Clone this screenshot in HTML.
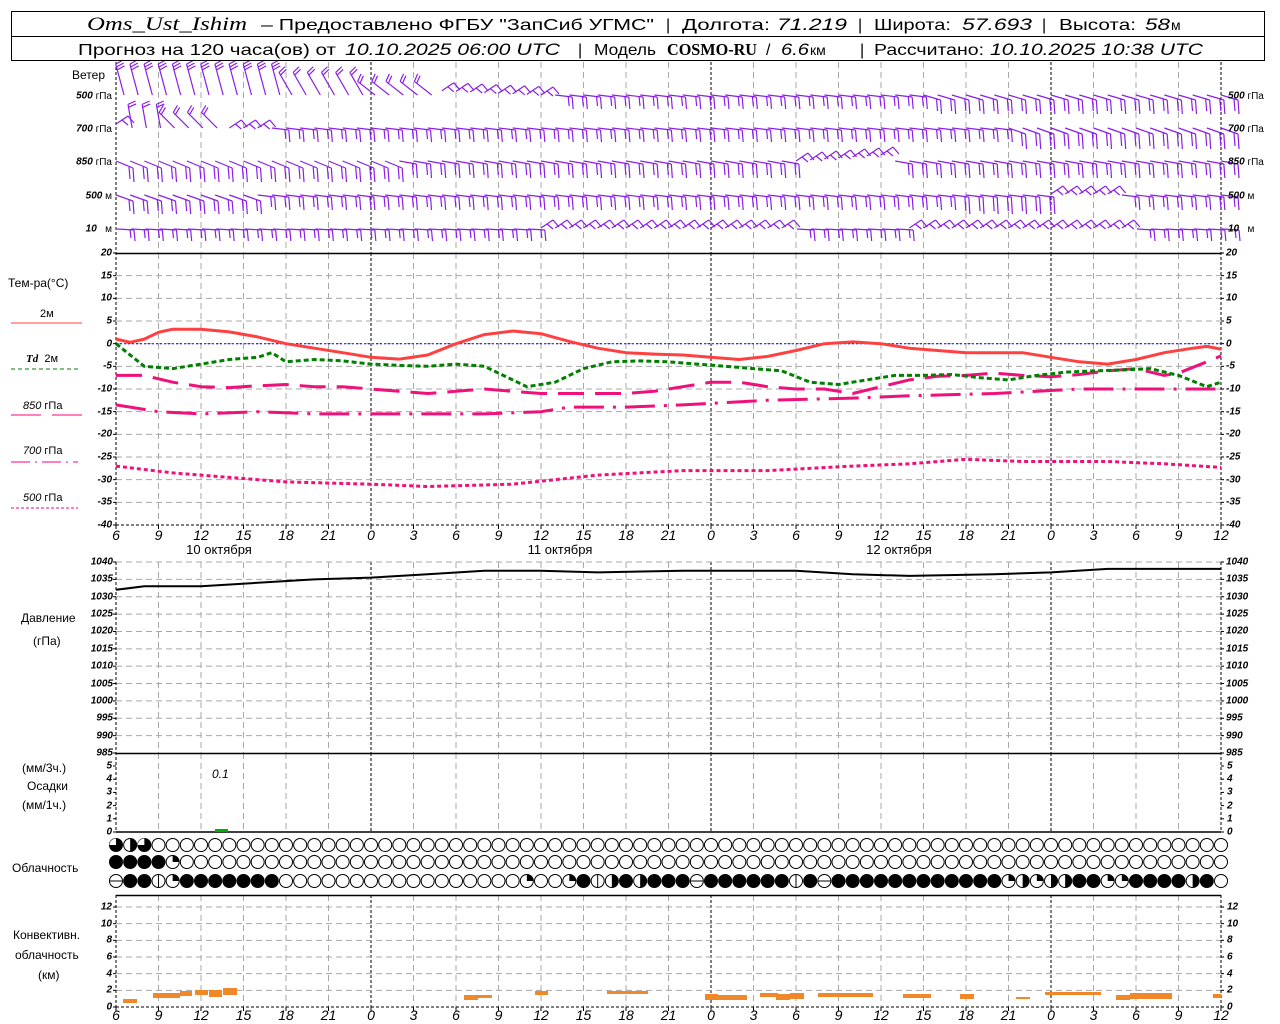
<!DOCTYPE html>
<html><head><meta charset="utf-8"><style>
body{margin:0;background:#fff}
svg{display:block}
text{font-family:"Liberation Sans",sans-serif;fill:#000}
.tl{font-size:10px;font-style:italic;font-weight:bold;text-anchor:end;dominant-baseline:central}
.tr{font-size:10px;font-style:italic;font-weight:bold;text-anchor:start;dominant-baseline:central}
.xl{font-size:14px;font-style:italic;text-anchor:middle}
.lb{font-size:12px}
.h{font-size:16px}
.hi{font-size:17px;font-style:italic}
</style></head><body>
<svg id="s" width="1280" height="1024" viewBox="0 0 1280 1024" xmlns="http://www.w3.org/2000/svg">
<rect x="0" y="0" width="1280" height="1024" fill="#fff"/>
<g id="g"></g>
<!-- header -->
<rect x="11.5" y="11.5" width="1253" height="49" fill="none" stroke="#000" stroke-width="1"/>
<line x1="11" y1="36.5" x2="1265" y2="36.5" stroke="#000"/>
<text x="87" y="30" textLength="160" lengthAdjust="spacingAndGlyphs" style="font-family:'Liberation Serif',serif;font-size:19px;font-style:italic">Oms_Ust_Ishim</text>
<text class="h" x="261" y="30" textLength="393" lengthAdjust="spacingAndGlyphs">– Предоставлено ФГБУ "ЗапСиб УГМС"</text>
<text class="h" x="666" y="30">|</text>
<text class="h" x="682" y="30" textLength="88" lengthAdjust="spacingAndGlyphs">Долгота:</text>
<text class="hi" x="777" y="30" textLength="70" lengthAdjust="spacingAndGlyphs">71.219</text>
<text class="h" x="858" y="30">|</text>
<text class="h" x="874" y="30" textLength="77" lengthAdjust="spacingAndGlyphs">Широта:</text>
<text class="hi" x="962" y="30" textLength="70" lengthAdjust="spacingAndGlyphs">57.693</text>
<text class="h" x="1042" y="30">|</text>
<text class="h" x="1059" y="30" textLength="77" lengthAdjust="spacingAndGlyphs">Высота:</text>
<text class="hi" x="1145" y="30" textLength="25" lengthAdjust="spacingAndGlyphs">58</text>
<text class="h" x="1171" y="30" style="font-size:14px">м</text>
<text class="h" x="78" y="55" textLength="258" lengthAdjust="spacingAndGlyphs">Прогноз на 120 часа(ов) от</text>
<text class="hi" x="345" y="55" textLength="215" lengthAdjust="spacingAndGlyphs">10.10.2025 06:00 UTC</text>
<text class="h" x="578" y="55">|</text>
<text class="h" x="594" y="55" textLength="62" lengthAdjust="spacingAndGlyphs">Модель</text>
<text x="667" y="55" textLength="90" lengthAdjust="spacingAndGlyphs" style="font-family:'Liberation Serif',serif;font-size:17px;font-weight:bold">COSMO-RU</text>
<text class="h" x="766" y="55">/</text>
<text class="hi" x="781" y="55" textLength="28" lengthAdjust="spacingAndGlyphs">6.6</text>
<text class="h" x="810" y="55" style="font-size:14px">км</text>
<text class="h" x="860" y="55">|</text>
<text class="h" x="874" y="55" textLength="110" lengthAdjust="spacingAndGlyphs">Рассчитано:</text>
<text class="hi" x="990" y="55" textLength="213" lengthAdjust="spacingAndGlyphs">10.10.2025 10:38 UTC</text>

<!-- wind labels -->
<text class="lb" x="72" y="79">Ветер</text>
<text class="tl" x="112" y="96">500 <tspan style="font-style:normal;font-weight:normal">гПа</tspan></text>
<text class="tl" x="112" y="129">700 <tspan style="font-style:normal;font-weight:normal">гПа</tspan></text>
<text class="tl" x="112" y="162">850 <tspan style="font-style:normal;font-weight:normal">гПа</tspan></text>
<text class="tl" x="112" y="196">500 <tspan style="font-style:normal;font-weight:normal">м</tspan></text>
<text class="tl" x="112" y="229">10 &#160;&#160;<tspan style="font-style:normal;font-weight:normal">м</tspan></text>
<text class="tr" x="1228" y="96">500 <tspan style="font-style:normal;font-weight:normal">гПа</tspan></text>
<text class="tr" x="1228" y="129">700 <tspan style="font-style:normal;font-weight:normal">гПа</tspan></text>
<text class="tr" x="1228" y="162">850 <tspan style="font-style:normal;font-weight:normal">гПа</tspan></text>
<text class="tr" x="1228" y="196">500 <tspan style="font-style:normal;font-weight:normal">м</tspan></text>
<text class="tr" x="1228" y="229">10 &#160;&#160;<tspan style="font-style:normal;font-weight:normal">м</tspan></text>

<!-- temp legend -->
<text class="lb" x="8" y="287">Тем-ра(°C)</text>
<text class="lb" x="40" y="317" style="font-size:11px">2м</text>
<line x1="11" y1="323" x2="82" y2="323" stroke="#ff4040" stroke-width="1"/>
<text class="lb" x="26" y="362" style="font-size:11px"><tspan style="font-style:italic;font-weight:bold;font-family:'Liberation Serif',serif">Td</tspan>&#160;&#160;2м</text>
<line x1="11" y1="369" x2="78" y2="369" stroke="#008000" stroke-dasharray="4,3"/>
<text class="lb" x="23" y="409" style="font-size:11px"><tspan style="font-style:italic">850</tspan> гПа</text>
<line x1="11" y1="415" x2="41" y2="415" stroke="#ff0080"/><line x1="52" y1="415" x2="82" y2="415" stroke="#ff0080"/>
<text class="lb" x="23" y="454" style="font-size:11px"><tspan style="font-style:italic">700</tspan> гПа</text>
<line x1="11" y1="462" x2="78" y2="462" stroke="#ff0080" stroke-dasharray="19,5,2,5"/>
<text class="lb" x="23" y="501" style="font-size:11px"><tspan style="font-style:italic">500</tspan> гПа</text>
<line x1="11" y1="508" x2="78" y2="508" stroke="#ff0080" stroke-dasharray="3,2"/>

<!-- temp ticks -->
<text class="tl" x="112" y="253">20</text><text class="tl" x="112" y="276">15</text><text class="tl" x="112" y="298">10</text><text class="tl" x="112" y="321">5</text><text class="tl" x="112" y="344">0</text><text class="tl" x="112" y="366">-5</text><text class="tl" x="112" y="389">-10</text><text class="tl" x="112" y="412">-15</text><text class="tl" x="112" y="434">-20</text><text class="tl" x="112" y="457">-25</text><text class="tl" x="112" y="480">-30</text><text class="tl" x="112" y="502">-35</text><text class="tl" x="112" y="525">-40</text>
<text class="tr" x="1226" y="253">20</text><text class="tr" x="1226" y="276">15</text><text class="tr" x="1226" y="298">10</text><text class="tr" x="1226" y="321">5</text><text class="tr" x="1226" y="344">0</text><text class="tr" x="1226" y="366">-5</text><text class="tr" x="1226" y="389">-10</text><text class="tr" x="1226" y="412">-15</text><text class="tr" x="1226" y="434">-20</text><text class="tr" x="1226" y="457">-25</text><text class="tr" x="1226" y="480">-30</text><text class="tr" x="1226" y="502">-35</text><text class="tr" x="1226" y="525">-40</text>

<!-- x labels temp -->
<g>
<text class="xl" x="116" y="540">6</text><text class="xl" x="158.5" y="540">9</text><text class="xl" x="201" y="540">12</text><text class="xl" x="243.5" y="540">15</text><text class="xl" x="286" y="540">18</text><text class="xl" x="328.5" y="540">21</text><text class="xl" x="371" y="540">0</text><text class="xl" x="413.5" y="540">3</text><text class="xl" x="456" y="540">6</text><text class="xl" x="498.5" y="540">9</text><text class="xl" x="541" y="540">12</text><text class="xl" x="583.5" y="540">15</text><text class="xl" x="626" y="540">18</text><text class="xl" x="668.5" y="540">21</text><text class="xl" x="711" y="540">0</text><text class="xl" x="753.5" y="540">3</text><text class="xl" x="796" y="540">6</text><text class="xl" x="838.5" y="540">9</text><text class="xl" x="881" y="540">12</text><text class="xl" x="923.5" y="540">15</text><text class="xl" x="966" y="540">18</text><text class="xl" x="1008.5" y="540">21</text><text class="xl" x="1051" y="540">0</text><text class="xl" x="1093.5" y="540">3</text><text class="xl" x="1136" y="540">6</text><text class="xl" x="1178.5" y="540">9</text><text class="xl" x="1221" y="540">12</text>
</g>
<text class="lb" x="219" y="554" text-anchor="middle" style="font-size:13px">10 октября</text>
<text class="lb" x="560" y="554" text-anchor="middle" style="font-size:13px">11 октября</text>
<text class="lb" x="899" y="554" text-anchor="middle" style="font-size:13px">12 октября</text>

<!-- pressure -->
<text class="lb" x="21" y="622">Давление</text>
<text class="lb" x="33" y="645">(гПа)</text>
<text class="tl" x="113" y="562">1040</text><text class="tl" x="113" y="579">1035</text><text class="tl" x="113" y="597">1030</text><text class="tl" x="113" y="614">1025</text><text class="tl" x="113" y="631">1020</text><text class="tl" x="113" y="649">1015</text><text class="tl" x="113" y="666">1010</text><text class="tl" x="113" y="684">1005</text><text class="tl" x="113" y="701">1000</text><text class="tl" x="113" y="718">995</text><text class="tl" x="113" y="736">990</text><text class="tl" x="113" y="753">985</text>
<text class="tr" x="1226" y="562">1040</text><text class="tr" x="1226" y="579">1035</text><text class="tr" x="1226" y="597">1030</text><text class="tr" x="1226" y="614">1025</text><text class="tr" x="1226" y="631">1020</text><text class="tr" x="1226" y="649">1015</text><text class="tr" x="1226" y="666">1010</text><text class="tr" x="1226" y="684">1005</text><text class="tr" x="1226" y="701">1000</text><text class="tr" x="1226" y="718">995</text><text class="tr" x="1226" y="736">990</text><text class="tr" x="1226" y="753">985</text>

<!-- precip -->
<text class="lb" x="22" y="772">(мм/3ч.)</text>
<text class="lb" x="27" y="790">Осадки</text>
<text class="lb" x="22" y="809">(мм/1ч.)</text>
<text class="tl" x="112" y="766">5</text><text class="tl" x="112" y="779">4</text><text class="tl" x="112" y="792">3</text><text class="tl" x="112" y="806">2</text><text class="tl" x="112" y="819">1</text><text class="tl" x="112" y="832">0</text>
<text class="tr" x="1227" y="766">5</text><text class="tr" x="1227" y="779">4</text><text class="tr" x="1227" y="792">3</text><text class="tr" x="1227" y="806">2</text><text class="tr" x="1227" y="819">1</text><text class="tr" x="1227" y="832">0</text>
<text x="212" y="778" style="font-size:12px;font-style:italic">0.1</text>

<text class="lb" x="12" y="872">Облачность</text>

<!-- convective -->
<text class="lb" x="13" y="939">Конвективн.</text>
<text class="lb" x="15" y="959">облачность</text>
<text class="lb" x="38" y="979">(км)</text>
<text class="tl" x="112" y="907">12</text><text class="tl" x="112" y="924">10</text><text class="tl" x="112" y="940">8</text><text class="tl" x="112" y="957">6</text><text class="tl" x="112" y="974">4</text><text class="tl" x="112" y="990">2</text><text class="tl" x="112" y="1007">0</text>
<text class="tr" x="1227" y="907">12</text><text class="tr" x="1227" y="924">10</text><text class="tr" x="1227" y="940">8</text><text class="tr" x="1227" y="957">6</text><text class="tr" x="1227" y="974">4</text><text class="tr" x="1227" y="990">2</text><text class="tr" x="1227" y="1007">0</text>
<g>
<text class="xl" x="116" y="1020">6</text><text class="xl" x="158.5" y="1020">9</text><text class="xl" x="201" y="1020">12</text><text class="xl" x="243.5" y="1020">15</text><text class="xl" x="286" y="1020">18</text><text class="xl" x="328.5" y="1020">21</text><text class="xl" x="371" y="1020">0</text><text class="xl" x="413.5" y="1020">3</text><text class="xl" x="456" y="1020">6</text><text class="xl" x="498.5" y="1020">9</text><text class="xl" x="541" y="1020">12</text><text class="xl" x="583.5" y="1020">15</text><text class="xl" x="626" y="1020">18</text><text class="xl" x="668.5" y="1020">21</text><text class="xl" x="711" y="1020">0</text><text class="xl" x="753.5" y="1020">3</text><text class="xl" x="796" y="1020">6</text><text class="xl" x="838.5" y="1020">9</text><text class="xl" x="881" y="1020">12</text><text class="xl" x="923.5" y="1020">15</text><text class="xl" x="966" y="1020">18</text><text class="xl" x="1008.5" y="1020">21</text><text class="xl" x="1051" y="1020">0</text><text class="xl" x="1093.5" y="1020">3</text><text class="xl" x="1136" y="1020">6</text><text class="xl" x="1178.5" y="1020">9</text><text class="xl" x="1221" y="1020">12</text>
</g>
</svg>
<script>
(function(){
var ns='http://www.w3.org/2000/svg',G=document.getElementById('g');
function el(t,a){var e=document.createElementNS(ns,t);for(var k in a)e.setAttribute(k,a[k]);G.appendChild(e);return e;}
function L(x1,y1,x2,y2,c,w,d){var a={x1:x1,y1:y1,x2:x2,y2:y2,stroke:c,'stroke-width':w||1};if(d)a['stroke-dasharray']=d;return el('line',a);}
var X=function(h){return 116+14.1667*h;};
var GR='#a8a8a8';
var panels=[[62,253],[253,525],[562,753],[753,832],[895,1007]];
for(var i=1;i<26;i++){var x=116+42.5*i,day=(i==6||i==14||i==22);
 panels.forEach(function(p){L(x,p[0],x,p[1],day?'#000':GR,1,day?'3,2':'6,4');});}
for(var k=1;k<12;k++){var y=253+22.667*k;L(116,y,1221,y,GR,1,'6,4');}
for(var k=0;k<11;k++){var y=562+17.364*k;L(116,y,1221,y,GR,1,'6,4');}
for(var k=1;k<=6;k++){var y=1007-16.667*k;L(116,y,1221,y,GR,1,'6,4');}
[[62,525],[562,832],[895,1007]].forEach(function(p){L(116,p[0],116,p[1],'#000',1,'3,2');L(1221,p[0],1221,p[1],'#000',1,'3,2');});
L(116,253.5,1221,253.5,'#000',1.5);L(116,525,1221,525,'#000',1,'3,2');
L(116,753.5,1221,753.5,'#000',1.5);L(116,832,1221,832,'#000',1.5);
L(116,895.5,1221,895.5,'#000',1.5);L(116,1007,1221,1007,'#000',1,'3,2');
function ticks(y0,y1,n){for(var k=0;k<=n;k++){var y=y0+(y1-y0)*k/n;L(113,y,116,y,'#000');L(1221,y,1224,y,'#000');}}
ticks(253,525,12);ticks(562,753,11);ticks(766,832,5);ticks(907,1007,6);
for(var i=0;i<=26;i++){var x=116+42.5*i;L(x,525,x,529,'#000');L(x,1007,x,1011,'#000');}
L(116,343.7,1221,343.7,'#0000ff',1,'2,2');
var TY=function(t){return 343.67-4.5333*t;};
function curve(pts,fy,c,w,d){var s='';pts.forEach(function(p){s+=X(p[0]).toFixed(1)+','+fy(p[1]).toFixed(1)+' ';});var a={points:s,fill:'none',stroke:c,'stroke-width':w,'stroke-linejoin':'round'};if(d)a['stroke-dasharray']=d;el('polyline',a);}
curve([[0,-27],[4,-28.5],[8,-29.5],[12,-30.5],[18,-31],[22,-31.5],[28,-31],[34,-29],[40,-28],[46,-28],[52,-27],[56,-26.5],[60,-25.5],[64,-26],[70,-26],[74,-26.5],[78,-27.3]],TY,'#f0107a',3,'4,3');
curve([[0,-13.5],[3,-15],[6,-15.5],[10,-15],[14,-15.5],[20,-15.5],[26,-15.5],[30,-15],[32,-14],[36,-14],[40,-13.5],[46,-12.5],[52,-12],[56,-11.5],[62,-11],[68,-10],[72,-10],[78,-10]],TY,'#f0107a',3,'30,9,3,9');
curve([[0,-7],[2,-7],[4,-8.5],[6,-9.5],[8,-9.7],[10,-9.3],[12,-9],[14,-9.5],[16,-9.5],[18,-10],[20,-10.5],[22,-11],[24,-10.5],[26,-10],[28,-10.5],[30,-11],[34,-11],[36,-11],[38,-10.5],[40,-9.5],[42,-8.5],[44,-8.5],[46,-9.5],[48,-10],[50,-10],[52,-11],[54,-9.5],[56,-8],[58,-7.2],[60,-7],[62,-6.5],[64,-7],[66,-7.3],[68,-6.8],[70,-6],[72,-5.5],[74,-7],[75,-6.5],[77,-4],[78,-2.7]],TY,'#f0107a',3,'26,11');
curve([[0,0],[2,-5],[4,-5.5],[6,-4.5],[8,-3.5],[10,-3],[11,-2],[12,-4],[14,-3.5],[16,-3.8],[18,-4.5],[20,-4.8],[22,-5],[24,-4.5],[26,-5],[28,-8],[29,-9.5],[31,-8.5],[33,-5.5],[35,-4],[37,-3.8],[39,-4],[41,-4.5],[43,-5],[45,-5.5],[47,-6],[49,-8.5],[51,-9],[53,-8],[55,-7],[57,-7],[59,-6.8],[61,-7.5],[63,-8],[65,-7],[67,-6.3],[69,-6],[71,-5.8],[73,-5.5],[75,-7],[77,-9.5],[78,-8.5]],TY,'#008000',3,'5,3');
curve([[0,1],[1,0.3],[2,1],[3,2.5],[4,3.2],[6,3.2],[8,2.6],[10,1.5],[12,0],[14,-1],[16,-2],[18,-3],[20,-3.4],[22,-2.5],[24,0],[26,2],[28,2.8],[30,2.2],[32,0.5],[34,-1],[36,-2],[38,-2.3],[40,-2.5],[42,-3],[44,-3.5],[46,-2.8],[48,-1.5],[50,0],[52,0.4],[54,0],[56,-1],[58,-1.5],[60,-2],[62,-2],[64,-2],[66,-3],[68,-4],[70,-4.5],[72,-3.5],[74,-2],[76,-1],[77,-0.6],[78,-1.2]],TY,'#ff4040',3);
var PY=function(p){return 562+(1040-p)*3.4727;};
curve([[0,1032],[2,1033],[6,1033],[10,1034],[14,1035],[18,1035.5],[22,1036.5],[26,1037.5],[30,1037.5],[34,1037],[40,1037.5],[48,1037.5],[52,1036.5],[56,1036],[62,1036.5],[66,1037],[70,1038],[78,1038]],PY,'#000',2);
el('rect',{x:215,y:829,width:13,height:3,fill:'#00b000'});
[[123,137,999,1003],[153,180,993,998],[180,192,991,996],[195,208,990,995],[209,222,990,997],[223,237,988,995],[464,478,995,1000],[478,492,995,998],[535,548,991,995],[607,621,991,994],[621,635,991,994],[635,648,991,994],[705,718,994,1000],[718,747,995,1000],[760,778,993,997],[776,790,994,1000],[790,804,993,999],[818,873,993,997],[903,931,994,998],[960,974,994,999],[1016,1030,997,999],[1045,1101,992,995],[1116,1130,995,1000],[1130,1172,993,999],[1213,1221,994,998]].forEach(function(b){el('rect',{x:b[0],y:b[2],width:b[1]-b[0],height:b[3]-b[2],fill:'#f0882a'});});
function rep(c,n){return new Array(n+1).join(c);}
var rows=[[845,'tht'+rep('o',76)],[862,'ffffq'+rep('o',74)],
[881,'effvq'+rep('f',7)+rep('o',17)+'qooq'+'fvhfhfffe'+'ffffff'+'vfe'+rep('f',12)+'qhqhhffqqffffhfo']];
rows.forEach(function(r){var y=r[0],s=r[1];for(var h=0;h<79;h++){var c=s.charAt(h)||'o',x=X(h),R=6.5;
 el('circle',{cx:x,cy:y,r:R,fill:c=='f'||c=='t'?'#000':'#fff',stroke:'#000','stroke-width':1});
 if(c=='h')el('path',{d:'M'+x+','+(y-R)+' A'+R+','+R+' 0 0 1 '+x+','+(y+R)+' Z',fill:'#000'});
 if(c=='q')el('path',{d:'M'+x+','+y+' L'+x+','+(y-R)+' A'+R+','+R+' 0 0 1 '+(x+R)+','+y+' Z',fill:'#000'});
 if(c=='t'){el('path',{d:'M'+x+','+y+' L'+(x-R)+','+y+' A'+R+','+R+' 0 0 1 '+x+','+(y-R)+' Z',fill:'#fff'});}
 if(c=='v')L(x,y-R,x,y+R,'#000',1);
 if(c=='e')L(x-R,y,x+R,y,'#000',1);
}});
var WC='#8a1ee6';
function up(x,y,a,len,n){var r=a*Math.PI/180,dx=-Math.cos(r),dy=-Math.sin(r);var ex=x+len*dx,ey=y+len*dy;
 L(x,y,ex,ey,WC,1.2);var tx=Math.sin(r),ty=-Math.cos(r);
 for(var k=0;k<(n||2);k++){var bx=ex-dx*3*k,by=ey-dy*3*k;L(bx,by,bx+tx*8+dx*2,by+ty*8+dy*2,WC,1.2);}}
function flat(x,y,dy,tl){var ex=x+17,ey=y+dy;L(x,y,ex,ey,WC,1.2);L(ex,ey,ex+1,ey+tl,WC,1.2);L(ex-4,ey-1,ex-3,ey+tl-3,WC,1.2);}
function zig(x,y){L(x,y,x+12,y-8,WC,1.2);L(x+12,y-8,x+18,y-1,WC,1.2);L(x+6,y-4,x+12,y+1,WC,1.2);}
for(var h=0;h<79;h++){var x=X(h);
 if(h<12)up(x+8,95,75,32,3);else if(h<18)up(x+6,95,60,26);else if(h<23)up(x+4,95,38,22);else if(h<31)zig(x,95-(30-h)*0.6);else flat(x,95,h>56?5:2,h>56?14:12);
 if(h==0)zig(x,124);else if(h<4)up(x+2,128,80,24);else if(h<8)up(x+2,128,45,22);else if(h<11)zig(x,128);else flat(x,128,h>62?6:2,h>62?15:12);
 if(h>=48&&h<55)zig(x,161-(h-48));else flat(x,161,h<20?7:3,14);
 if(h>=66&&h<71)zig(x,194);else flat(x,195,h<10?6:2,h>58&&h<66?17:13);
 if((h>=30&&h<48)||(h>=56&&h<72))zig(x,228);else flat(x+1,229,1,11);
}
})();
</script>
</body></html>
